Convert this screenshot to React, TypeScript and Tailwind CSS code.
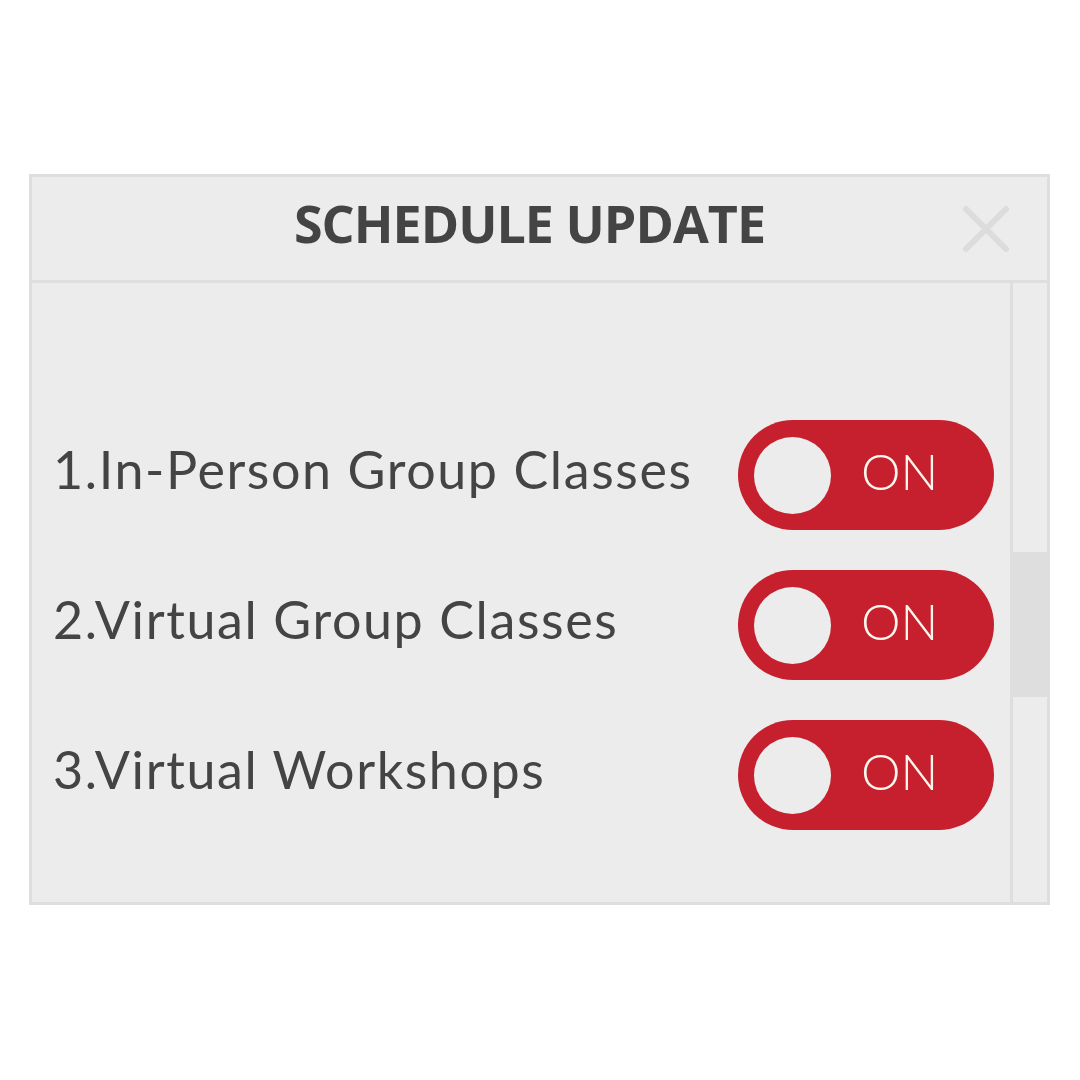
import React from 'react';

const items = ['1.In-Person Group Classes', '2.Virtual Group Classes', '3.Virtual Workshops'];

function Toggle({ label }: { label: string }) {
  return (
    <div className="flex h-[110px] w-[256px] shrink-0 items-center rounded-full bg-[#c6202f] pl-[16px]">
      <div className="h-[77px] w-[77px] rounded-full bg-[#ececec]" />
      <span
        className="-mt-[8px] ml-[30px] text-[50px] leading-none text-[#fdf6ec]"
        style={{ fontFamily: 'Lato, "Noto Sans", sans-serif', fontWeight: 300 }}
      >
        {label}
      </span>
    </div>
  );
}

export default function App() {
  return (
    <div className="min-h-screen bg-white pl-[29px] pt-[174px]">
      <div className="flex h-[731px] w-[1021px] flex-col border-[3px] border-[#dedede] bg-[#ececec]">
        <header className="relative flex h-[106px] shrink-0 items-center justify-center border-b-[3px] border-[#dedede] pr-[20px]">
          <h1
            className="-mt-[12px] text-[52px] font-bold leading-none tracking-[-1px] text-[#444444]"
            style={{ fontFamily: '"Open Sans", "Noto Sans", sans-serif' }}
          >
            SCHEDULE UPDATE
          </h1>
          <svg
            className="absolute right-[36px] top-[27px]"
            width="50"
            height="50"
            viewBox="0 0 50 50"
            fill="none"
          >
            <path d="M5 5 L45 45 M45 5 L5 45" stroke="#dcdcdc" strokeWidth="6" strokeLinecap="round" />
          </svg>
        </header>
        <div className="flex min-h-0 flex-1">
          <main className="flex flex-1 flex-col gap-[40px] pl-[21px] pr-[16px] pt-[137px]">
            {items.map((item) => (
              <div key={item} className="flex items-center justify-between">
                <span
                  className="-mt-[13px] text-[52px] leading-none tracking-[1.6px] text-[#444444]"
                  style={{ fontFamily: 'Lato, "Noto Sans", sans-serif', fontWeight: 400 }}
                >
                  {item}
                </span>
                <Toggle label="ON" />
              </div>
            ))}
          </main>
          <aside className="flex w-[37px] shrink-0 flex-col border-l-[3px] border-[#dedede]">
            <div className="-ml-[3px] mt-[269px] h-[145px] w-[40px] bg-[#dedede]" />
          </aside>
        </div>
      </div>
    </div>
  );
}
